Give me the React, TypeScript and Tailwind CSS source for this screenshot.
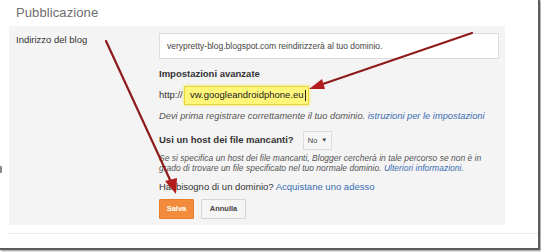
import React from "react";

export default function App() {
  return (
    <div
      className="relative w-[541px] h-[252px] bg-white overflow-hidden"
      style={{ fontFamily: '"Liberation Sans", Arial, sans-serif' }}
    >
      <div className="relative w-[540px] h-[250px] border-r-[2px] border-b-[2px] border-[#5c5c5c] shadow-[1px_1px_2px_rgba(0,0,0,0.45)] bg-white">
        <div className="pl-[16px] pt-[4px] h-[26px] text-[13px] leading-[18px] text-[#6e6e6e] tracking-[0.1px]">
          Pubblicazione
        </div>
        <div className="ml-[9px] w-[496px] h-[199px] bg-[#f4f4f4] flex">
          <div className="w-[150px] pl-[7px] pt-[8px] text-[9.5px] leading-[12px] text-[#333]">
            Indirizzo del blog
          </div>
          <div className="flex flex-col pt-[7px] text-[#333]">
            <div className="w-[340px] h-[26px] bg-white border border-[#dcdcdc] flex items-center pl-[7px] text-[8.5px] text-[#444]">
              verypretty-blog.blogspot.com reindirizzerà al tuo dominio.
            </div>
            <div className="mt-[9px] text-[9.5px] leading-[12px] font-bold text-[#333]">
              Impostazioni avanzate
            </div>
            <div className="mt-[6px] h-[19px] flex items-center text-[9.5px]">
              <span className="w-[25px]">http://</span>
              <div className="w-[125px] h-[19px] bg-[#fff67a] border border-[#e6d640] shadow-[0_0_3px_#f2e24a] flex items-center pl-[5px] text-[9.5px] text-[#222]">
                vw.googleandroidphone.eu
                <span className="inline-block w-[1px] h-[11px] bg-[#222] ml-[1px]" />
              </div>
            </div>
            <div className="mt-[5px] text-[9.3px] leading-[12px] italic text-[#555]">
              Devi prima registrare correttamente il tuo dominio.{" "}
              <span className="text-[#3b6db3]">istruzioni per le impostazioni</span>
            </div>
            <div className="mt-[9px] h-[19px] flex items-center">
              <span className="text-[9.5px] font-bold text-[#333] w-[144px]">
                Usi un host dei file mancanti?
              </span>
              <div className="w-[29px] h-[19px] bg-[#f6f6f6] border border-[#dcdcdc] flex items-center justify-center gap-[4px] text-[7.5px] text-[#444]">
                <span>No</span>
                <span className="text-[6px]">▼</span>
              </div>
            </div>
            <div className="mt-[3px] text-[8.5px] leading-[10px] italic text-[#555]">
              <div>Se si specifica un host dei file mancanti, Blogger cercherà in tale percorso se non è in</div>
              <div>
                grado di trovare un file specificato nel tuo normale dominio.{" "}
                <span className="text-[#3b6db3]">Ulteriori informazioni.</span>
              </div>
            </div>
            <div className="mt-[8px] text-[9.5px] leading-[12px] text-[#333]">
              Hai bisogno di un dominio? <span className="text-[#3b6db3]">Acquistane uno adesso</span>
            </div>
            <div className="mt-[6px] flex gap-[7px]">
              <div className="w-[35px] h-[20px] bg-[#f28c3c] border border-[#e57e2e] rounded-[1px] flex items-center justify-center text-[7.5px] font-bold text-white">
                Salva
              </div>
              <div className="w-[45px] h-[20px] bg-[#f5f5f5] border border-[#d4d4d4] rounded-[1px] flex items-center justify-center text-[7.5px] font-bold text-[#444]">
                Annulla
              </div>
            </div>
          </div>
        </div>
        <div className="ml-[9px] mt-[8px] h-[1px] bg-[#ececec]" />
        <div className="absolute left-0 top-[166px] w-[2px] h-[7px] bg-[#8a8a8a] rounded-r-[1px]" />
      </div>

      <svg className="absolute inset-0 pointer-events-none" width="541" height="252">
        <line x1="472" y1="33" x2="320" y2="85" stroke="#8e1b1b" strokeWidth="2.2" strokeLinecap="round" />
        <polygon points="309,89 322,79 325,89" fill="#b31d1d" />
        <line x1="106" y1="41" x2="171" y2="182" stroke="#8e1b1b" strokeWidth="2.2" strokeLinecap="round" />
        <polygon points="176,194 165,181 177,178" fill="#b31d1d" />
      </svg>
    </div>
  );
}
